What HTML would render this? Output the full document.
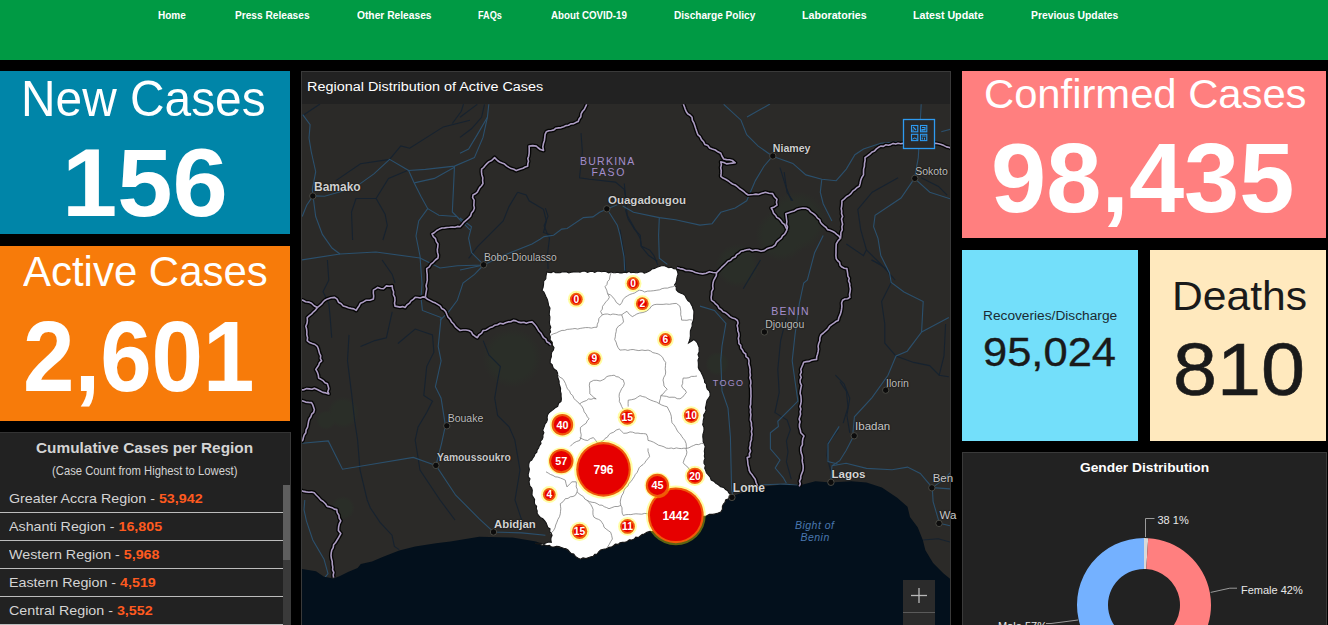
<!DOCTYPE html>
<html><head><meta charset="utf-8"><style>
html,body{margin:0;padding:0;background:#000;width:1328px;height:625px;overflow:hidden;font-family:"Liberation Sans", sans-serif;}
.t{position:absolute;white-space:nowrap;line-height:1;transform-origin:0 0;}
.b{position:absolute;}
</style></head><body>
<div class="b" style="left:0px;top:0px;width:1328px;height:60px;background:#009a44;"></div>
<div class="t" style="left:157.86px;top:9.38px;font-size:11.60px;color:#fff;transform:scaleX(0.8634);font-weight:700;">Home</div>
<div class="t" style="left:234.69px;top:9.38px;font-size:11.60px;color:#fff;transform:scaleX(0.8759);font-weight:700;">Press Releases</div>
<div class="t" style="left:356.59px;top:9.38px;font-size:11.60px;color:#fff;transform:scaleX(0.8831);font-weight:700;">Other Releases</div>
<div class="t" style="left:478.33px;top:9.38px;font-size:11.60px;color:#fff;transform:scaleX(0.7896);font-weight:700;">FAQs</div>
<div class="t" style="left:550.61px;top:9.38px;font-size:11.60px;color:#fff;transform:scaleX(0.8416);font-weight:700;">About COVID-19</div>
<div class="t" style="left:673.70px;top:9.38px;font-size:11.60px;color:#fff;transform:scaleX(0.8695);font-weight:700;">Discharge Policy</div>
<div class="t" style="left:801.96px;top:9.38px;font-size:11.60px;color:#fff;transform:scaleX(0.9205);font-weight:700;">Laboratories</div>
<div class="t" style="left:913.15px;top:9.38px;font-size:11.60px;color:#fff;transform:scaleX(0.9209);font-weight:700;">Latest Update</div>
<div class="t" style="left:1030.98px;top:9.38px;font-size:11.60px;color:#fff;transform:scaleX(0.8921);font-weight:700;">Previous Updates</div>
<div class="b" style="left:0px;top:71px;width:290px;height:163px;background:#0085a8;"></div>
<div class="b" style="left:0px;top:246px;width:290px;height:175px;background:#f77b0a;"></div>
<div class="b" style="left:0px;top:432px;width:291px;height:193px;background:#222222;box-shadow:inset -1px 0 0 #3a3a3a, inset 0 1px 0 #333;"></div>
<div class="b" style="left:301px;top:71px;width:650px;height:554px;background:#222222;box-shadow:inset 0 1px 0 #3a3a3a, inset 1px 0 0 #3a3a3a, inset -1px 0 0 #3a3a3a;"></div>
<div class="b" style="left:962px;top:71px;width:364px;height:167px;background:#ff7f7f;"></div>
<div class="b" style="left:962px;top:250px;width:176px;height:191px;background:#73dffa;"></div>
<div class="b" style="left:1150px;top:250px;width:176px;height:191px;background:#ffe9be;"></div>
<div class="b" style="left:962px;top:452px;width:365px;height:173px;background:#222222;box-shadow:inset 0 1px 0 #3a3a3a, inset 1px 0 0 #3a3a3a, inset -1px 0 0 #3a3a3a;"></div>
<div class="t" style="left:20.97px;top:74.07px;font-size:49.52px;color:#fff;transform:scaleX(0.9661);">New Cases</div>
<div class="t" style="left:61.63px;top:134.96px;font-size:95.59px;color:#fff;transform:scaleX(1.0401);font-weight:700;">156</div>
<div class="t" style="left:22.70px;top:250.60px;font-size:41.70px;color:#fff;transform:scaleX(1.0061);">Active Cases</div>
<div class="t" style="left:22.52px;top:306.43px;font-size:100.47px;color:#fff;transform:scaleX(0.9209);font-weight:700;">2,601</div>
<div class="t" style="left:984.21px;top:74.28px;font-size:41.01px;color:#fff;transform:scaleX(1.0182);">Confirmed Cases</div>
<div class="t" style="left:991.03px;top:128.44px;font-size:99.04px;color:#fff;transform:scaleX(1.0016);font-weight:700;">98,435</div>
<div class="t" style="left:983.30px;top:308.58px;font-size:13.49px;color:#1b2b33;transform:scaleX(1.0171);">Recoveries/Discharge</div>
<div class="t" style="left:982.93px;top:332.00px;font-size:41.34px;color:#1a1a1a;transform:scaleX(1.0521);-webkit-text-stroke:0.35px #1a1a1a;">95,024</div>
<div class="t" style="left:1171.99px;top:275.65px;font-size:40.46px;color:#1a1a1a;transform:scaleX(1.0535);">Deaths</div>
<div class="t" style="left:1172.74px;top:332.00px;font-size:74.64px;color:#1a1a1a;transform:scaleX(1.0592);-webkit-text-stroke:0.6px #1a1a1a;">810</div>
<div class="t" style="left:306.65px;top:80.08px;font-size:13.49px;color:#fff;transform:scaleX(1.0686);">Regional Distribution of Active Cases</div>
<div class="t" style="left:36.08px;top:440.20px;font-size:15.00px;color:#d4d4d4;transform:scaleX(1.0255);font-weight:700;">Cumulative Cases per Region</div>
<div class="t" style="left:51.72px;top:464.55px;font-size:12.11px;color:#d4d4d4;transform:scaleX(0.9310);">(Case Count from Highest to Lowest)</div>
<div class="t" style="left:9.20px;top:491.61px;font-size:13.10px;color:#d4d4d4;transform:scaleX(1.0900);">Greater Accra Region - <b style="color:#ff5a1f">53,942</b></div>
<div class="b" style="left:0px;top:512px;width:283px;height:1px;background:#bdbdbd;"></div>
<div class="t" style="left:9.20px;top:519.61px;font-size:13.10px;color:#d4d4d4;transform:scaleX(1.0900);">Ashanti Region - <b style="color:#ff5a1f">16,805</b></div>
<div class="b" style="left:0px;top:540px;width:283px;height:1px;background:#bdbdbd;"></div>
<div class="t" style="left:9.20px;top:547.61px;font-size:13.10px;color:#d4d4d4;transform:scaleX(1.0900);">Western Region - <b style="color:#ff5a1f">5,968</b></div>
<div class="b" style="left:0px;top:568px;width:283px;height:1px;background:#bdbdbd;"></div>
<div class="t" style="left:9.20px;top:575.61px;font-size:13.10px;color:#d4d4d4;transform:scaleX(1.0900);">Eastern Region - <b style="color:#ff5a1f">4,519</b></div>
<div class="b" style="left:0px;top:596px;width:283px;height:1px;background:#bdbdbd;"></div>
<div class="t" style="left:9.20px;top:603.61px;font-size:13.10px;color:#d4d4d4;transform:scaleX(1.0900);">Central Region - <b style="color:#ff5a1f">3,552</b></div>
<div class="b" style="left:0px;top:624px;width:283px;height:1px;background:#bdbdbd;"></div>
<div class="b" style="left:283px;top:485px;width:7px;height:140px;background:#3a3a3a;"></div>
<div class="b" style="left:283px;top:485px;width:7px;height:75px;background:#5e5e5e;"></div>
<div class="t" style="left:1079.85px;top:461.28px;font-size:13.49px;color:#fff;transform:scaleX(1.0201);font-weight:700;">Gender Distribution</div>

<svg class="b" style="left:0;top:0" width="1328" height="625" viewBox="0 0 1328 625"><clipPath id="mc"><rect x="302" y="104" width="648" height="521"/></clipPath><g clip-path="url(#mc)"><rect x="302" y="104" width="648" height="521" fill="#2b2a28"/>
<defs><radialGradient id="gr"><stop offset="0" stop-color="#2a2e28"/><stop offset="0.7" stop-color="#2a2e28"/><stop offset="1" stop-color="#2a2e28" stop-opacity="0"/></radialGradient></defs>
<circle cx="512" cy="357.8" r="30" fill="url(#gr)"/>
<circle cx="343.2" cy="412.6" r="16" fill="url(#gr)"/>
<circle cx="781.3" cy="235.4" r="26" fill="url(#gr)"/>
<circle cx="797" cy="221" r="30" fill="url(#gr)"/>
<circle cx="737.4" cy="265.8" r="22" fill="url(#gr)"/>
<circle cx="717.3" cy="363.7" r="12" fill="url(#gr)"/>
<circle cx="343" cy="508" r="12" fill="url(#gr)"/>
<circle cx="326" cy="420" r="10" fill="url(#gr)"/>
<polyline points="335.8,180.6 360.5,163.8 389.6,159.4 400.8,145.9 409.7,148.2 443.3,126.9 470.0,120.2" fill="none" stroke="#16222f" stroke-width="1.1"/>
<polyline points="452.3,123.5 461.3,111.2 463.5,104.0" fill="none" stroke="#16222f" stroke-width="1.1"/>
<polyline points="376.1,198.5 388.5,178.4 407.5,170.5" fill="none" stroke="#16222f" stroke-width="1.1"/>
<polyline points="376.1,198.5 356.0,198.5 351.5,212.0 352.6,240.0" fill="none" stroke="#16222f" stroke-width="1.1"/>
<polyline points="376.1,198.5 385.1,214.2 387.3,225.4 382.9,240.0" fill="none" stroke="#16222f" stroke-width="1.1"/>
<polyline points="460.0,117.3 471.5,108.6 477.3,104.3" fill="none" stroke="#16222f" stroke-width="1.1"/>
<polyline points="460.0,137.4 471.5,128.8 481.6,117.3 484.5,104.3" fill="none" stroke="#16222f" stroke-width="1.1"/>
<polyline points="581.0,133.1 582.4,151.8 579.5,177.8 589.6,179.2 615.5,182.1 624.2,189.3 627.0,203.7" fill="none" stroke="#16222f" stroke-width="1.1"/>
<polyline points="517.6,192.2 526.2,195.0 529.1,200.8 543.5,209.4 546.4,221.0 543.5,232.5 552.2,235.4" fill="none" stroke="#16222f" stroke-width="1.1"/>
<polyline points="517.6,192.2 509.0,206.6 503.2,221.0 488.8,235.4 477.3,246.9 468.6,258.4" fill="none" stroke="#16222f" stroke-width="1.1"/>
<polyline points="625.4,209.5 628.1,219.0 634.9,229.8 640.3,235.2 641.0,246.1 649.8,250.1 653.9,255.6 657.9,265.1" fill="none" stroke="#16222f" stroke-width="1.1"/>
<polyline points="545.4,208.1 548.1,216.3 544.1,225.8 546.8,232.5 549.5,238.0 547.5,254.2 548.1,269.1" fill="none" stroke="#16222f" stroke-width="1.1"/>
<polyline points="624.3,183.5 627.2,215.2 640.2,238.2 641.6,246.9 648.8,255.5 657.4,261.3" fill="none" stroke="#16222f" stroke-width="1.1"/>
<polyline points="620.0,229.6 624.3,255.5 625.8,272.8" fill="none" stroke="#16222f" stroke-width="1.1"/>
<polyline points="784.2,172.0 787.0,192.2 792.8,200.8" fill="none" stroke="#16222f" stroke-width="1.1"/>
<polyline points="780.0,167.7 785.8,186.4 791.5,200.8" fill="none" stroke="#16222f" stroke-width="1.1"/>
<polyline points="898.1,177.8 872.2,192.2 857.8,209.5 860.7,229.6 866.4,249.8 863.5,255.6 846.3,244.0" fill="none" stroke="#16222f" stroke-width="1.1"/>
<polyline points="866.4,249.8 880.8,264.2 895.2,280.0" fill="none" stroke="#16222f" stroke-width="1.1"/>
<polyline points="921.2,177.8 938.5,186.4 947.1,195.1" fill="none" stroke="#16222f" stroke-width="1.1"/>
<polyline points="327.4,260.0 328.8,280.2 323.0,291.7 328.8,303.2 330.2,317.6 331.7,337.8" fill="none" stroke="#16222f" stroke-width="1.1"/>
<polyline points="349.0,334.9 347.5,360.8 351.8,395.4 354.7,421.3 357.6,440.0 360.0,470.0 367.2,500.0 370.4,508.0 380.0,522.4 392.0,535.2 394.4,546.4 399.2,549.6" fill="none" stroke="#16222f" stroke-width="1.1"/>
<polyline points="392.2,311.8 386.4,337.8 374.9,340.6 360.5,346.4" fill="none" stroke="#16222f" stroke-width="1.1"/>
<polyline points="397.9,343.5 415.2,329.1 432.5,334.9 433.9,352.2 426.7,366.6 423.8,395.4 432.5,401.1 426.7,412.6 418.1,427.0 415.2,440.0 420.0,470.0 440.0,500.0 455.0,520.0" fill="none" stroke="#16222f" stroke-width="1.1"/>
<polyline points="382.1,260.0 392.2,274.4 395.0,283.0" fill="none" stroke="#16222f" stroke-width="1.1"/>
<polyline points="483.2,340.6 488.9,355.0 500.4,366.5 497.6,380.9 494.7,398.1 497.6,415.4 509.1,426.9 514.8,439.9 520.0,470.0 515.0,500.0 525.0,530.0" fill="none" stroke="#16222f" stroke-width="1.1"/>
<polyline points="760.5,260.0 751.8,274.4 743.2,288.8" fill="none" stroke="#16222f" stroke-width="1.1"/>
<polyline points="786.4,317.6 780.6,340.6 777.8,369.4 779.2,392.5 774.9,412.6 787.2,420.0 790.4,429.6 786.4,440.8 788.0,452.0 786.4,461.6 791.2,479.2" fill="none" stroke="#16222f" stroke-width="1.1"/>
<polyline points="835.4,375.2 844.0,383.8 849.8,398.2 846.9,415.5 849.8,432.8" fill="none" stroke="#16222f" stroke-width="1.1"/>
<polyline points="871.4,260.0 880.0,264.3" fill="none" stroke="#16222f" stroke-width="1.1"/>
<polyline points="872.0,260.0 888.0,269.6 891.2,282.4 881.6,301.6 884.8,324.0 884.8,343.2 896.0,356.0 913.6,362.4 929.6,365.6 939.2,375.2 948.8,376.8" fill="none" stroke="#16222f" stroke-width="1.1"/>
<polyline points="939.2,375.2 944.0,356.0 945.6,324.0" fill="none" stroke="#16222f" stroke-width="1.1"/>
<polyline points="840.0,381.6 846.4,391.2 848.0,407.2 843.2,423.2" fill="none" stroke="#16222f" stroke-width="1.1"/>
<polyline points="838.4,430.0 828.1,442.8 826.9,455.6 830.7,471.0" fill="none" stroke="#16222f" stroke-width="1.1"/>
<polyline points="922.8,540.0 938.2,538.8 952.0,542.6" fill="none" stroke="#16222f" stroke-width="1.1"/>
<polyline points="320.0,104.0 302.0,116.0" fill="none" stroke="#16222f" stroke-width="1.1"/>
<polyline points="302.7,114.6 310.1,124.6 309.0,138.1 311.2,151.5 315.7,171.7 312.3,189.6 313.0,195.9" fill="none" stroke="#2b506d" stroke-width="1.1"/>
<polyline points="313.0,195.9 324.6,196.3 340.3,191.8 358.2,185.1 373.9,173.9 389.6,159.4 408.6,170.5 414.2,182.9 420.9,196.3 427.7,208.6 418.7,220.9 416.0,236.0 420.0,256.0 422.0,284.0 421.0,297.4 422.4,310.4 441.1,317.6 438.2,346.4 441.1,360.8 435.4,386.7 441.1,398.2 445.4,425.6 441.6,443.3 435.9,465.4 455.7,495.2 479.3,518.8 493.5,532.0 521.8,532.9 545.4,535.3" fill="none" stroke="#2b506d" stroke-width="1.1"/>
<polyline points="408.6,170.5 425.4,169.4 454.5,166.1 470.0,159.4 474.4,157.6 483.0,137.4 487.4,117.3 488.8,104.3" fill="none" stroke="#2b506d" stroke-width="1.1"/>
<polyline points="414.2,182.9 434.4,178.4 454.5,167.2" fill="none" stroke="#2b506d" stroke-width="1.1"/>
<polyline points="454.5,166.1 453.4,189.6 452.3,212.0 456.8,216.5 470.0,229.9" fill="none" stroke="#2b506d" stroke-width="1.1"/>
<polyline points="427.7,208.6 438.9,215.3 456.8,216.5" fill="none" stroke="#2b506d" stroke-width="1.1"/>
<polyline points="313.0,195.9 306.7,205.3 302.2,216.5" fill="none" stroke="#2b506d" stroke-width="1.1"/>
<polyline points="313.0,195.9 315.7,216.5 322.4,234.4 332.0,248.0 340.0,254.0" fill="none" stroke="#2b506d" stroke-width="1.1"/>
<polyline points="301.0,260.0 340.0,254.0 376.0,252.0 420.0,258.0 440.0,268.0 457.3,265.8 483.6,265.0 503.2,255.5 532.0,244.0 540.0,239.3 544.1,236.6 553.6,235.2 561.7,229.1 567.1,228.5 583.4,217.6 592.9,216.9 599.6,212.2 606.9,208.9 617.3,204.7" fill="none" stroke="#2b506d" stroke-width="1.1"/>
<polyline points="483.6,265.0 474.5,274.4 463.0,283.0 457.3,300.3 448.6,311.8 440.0,320.4" fill="none" stroke="#2b506d" stroke-width="1.1"/>
<polyline points="483.6,265.0 460.0,270.0" fill="none" stroke="#2b506d" stroke-width="1.1"/>
<polyline points="460.0,218.0 471.5,226.7 468.6,238.2 471.5,252.6 483.0,264.2" fill="none" stroke="#2b506d" stroke-width="1.1"/>
<polyline points="460.0,153.3 468.6,149.0 477.3,134.6 487.4,117.3" fill="none" stroke="#2b506d" stroke-width="1.1"/>
<polyline points="609.1,212.2 617.3,225.1 620.0,235.2 624.0,256.9 624.7,270.5" fill="none" stroke="#2b506d" stroke-width="1.1"/>
<polyline points="622.7,206.1 633.5,212.2 659.3,217.6 675.5,219.7 699.9,225.1 712.1,223.7 720.8,212.3 735.2,208.0 746.7,200.8 755.4,180.6 764.0,166.2 772.6,156.2" fill="none" stroke="#2b506d" stroke-width="1.1"/>
<polyline points="659.3,217.6 658.6,235.2 659.3,258.3 667.4,264.4" fill="none" stroke="#2b506d" stroke-width="1.1"/>
<polyline points="772.6,156.2 758.2,146.1 746.7,134.6 741.0,120.2 723.7,104.3" fill="none" stroke="#2b506d" stroke-width="1.1"/>
<polyline points="772.6,156.2 792.8,163.4 805.9,174.9 821.8,179.2 836.2,180.7 846.3,169.1 854.9,154.7 863.5,149.0 880.8,143.2 898.1,141.8" fill="none" stroke="#2b506d" stroke-width="1.1"/>
<polyline points="821.8,179.2 820.3,192.2 823.2,203.7 831.9,221.0" fill="none" stroke="#2b506d" stroke-width="1.1"/>
<polyline points="914.5,178.4 901.0,198.0 875.1,215.2 873.6,226.8 878.0,238.3 880.8,255.6 889.5,272.9 891.2,282.4 904.0,292.0 923.2,301.6 921.6,332.0 907.2,351.2 896.0,356.0 888.0,375.2 872.0,397.6 854.4,416.8 852.8,434.4" fill="none" stroke="#2b506d" stroke-width="1.1"/>
<polyline points="921.6,332.0 948.8,317.6" fill="none" stroke="#2b506d" stroke-width="1.1"/>
<polyline points="914.5,178.4 929.8,192.2 952.0,199.4" fill="none" stroke="#2b506d" stroke-width="1.1"/>
<polyline points="914.5,178.4 918.3,157.6 921.2,104.3" fill="none" stroke="#2b506d" stroke-width="1.1"/>
<polyline points="941.3,131.7 952.0,128.8" fill="none" stroke="#2b506d" stroke-width="1.1"/>
<polyline points="823.2,235.4 814.6,252.7 807.4,280.0 803.7,283.0 799.4,303.2 795.0,334.9 792.2,360.8 795.0,381.0 797.9,401.1 792.2,406.9 777.8,421.3 778.4,426.4 770.4,432.8 770.4,448.8 780.0,460.0 775.2,468.0 783.2,477.6 786.4,483.2" fill="none" stroke="#2b506d" stroke-width="1.1"/>
<polyline points="700.0,306.1 714.4,310.4 725.9,323.4 722.0,346.0 720.8,360.0 722.0,391.0 728.0,408.0 730.4,436.8 731.6,489.6 732.8,495.2" fill="none" stroke="#2b506d" stroke-width="1.1"/>
<polyline points="854.2,435.1 846.1,450.5 839.7,460.7 832.0,465.8 830.7,482.5" fill="none" stroke="#2b506d" stroke-width="1.1"/>
<polyline points="832.0,465.8 846.1,463.3 866.5,468.4 892.1,469.7 907.5,467.1 920.3,473.5 932.3,487.6 951.0,488.9" fill="none" stroke="#2b506d" stroke-width="1.1"/>
<polyline points="932.3,487.6 933.1,501.6 939.5,523.4 951.0,526.0" fill="none" stroke="#2b506d" stroke-width="1.1"/>
<polyline points="932.3,487.6 943.3,479.9 952.0,470.9" fill="none" stroke="#2b506d" stroke-width="1.1"/>
<polyline points="760.8,484.8 784.8,484.0 799.2,485.6" fill="none" stroke="#2b506d" stroke-width="1.1"/>
<polyline points="839.2,426.4 828.0,444.0 828.0,461.6 837.6,464.0" fill="none" stroke="#2b506d" stroke-width="1.1"/>
<polyline points="301.0,443.3 328.3,440.9 342.5,469.2 370.8,464.5 413.3,457.4 435.9,465.4" fill="none" stroke="#2b506d" stroke-width="1.1"/>
<polyline points="304.8,500.0 304.0,509.6 306.4,520.8 312.8,540.0 324.0,559.2 328.0,573.6 324.8,577.6" fill="none" stroke="#2b506d" stroke-width="1.1"/>
<polyline points="747.0,117.0 770.0,104.0" fill="none" stroke="#2b506d" stroke-width="1.1"/>
<polygon points="301.0,568.8 316.0,571.2 324.0,576.8 333.6,578.4 340.0,576.0 348.0,572.0 357.6,568.0 360.8,564.0 372.0,561.6 383.2,556.8 399.2,550.4 415.2,546.4 436.0,543.2 450.4,541.6 479.3,536.7 512.4,537.6 536.0,541.4 546.8,545.7 563.6,548.2 573.7,554.1 580.4,559.2 588.8,557.5 597.2,554.1 600.6,549.9 609.0,547.4 622.4,542.4 634.2,539.0 644.3,534.0 650.0,531.4 670.0,528.0 690.0,521.0 701.9,517.0 712.8,514.4 720.8,512.0 722.4,506.4 725.6,500.0 732.8,496.0 748.0,490.4 764.0,486.4 780.0,484.8 799.2,485.6 815.4,481.2 830.7,482.5 851.2,481.2 866.5,482.5 881.9,487.6 897.2,497.8 907.5,506.8 910.0,517.0 917.7,527.2 922.8,540.0 925.4,550.3 933.1,563.1 943.3,573.3 951.0,579.7 951.0,626.0 301.0,626.0" fill="#03101c"/>
<polyline points="586.7,104.3 585.5,106.8 584.3,109.4 582.4,111.5 581.1,113.9 580.8,116.8 579.1,119.1 578.1,121.6 575.7,122.6 573.4,123.7 570.8,123.9 568.5,125.3 565.9,125.6 563.7,126.8 561.2,127.6 558.6,127.9 556.0,128.2 553.9,129.9 551.4,130.5 548.8,130.8 546.4,131.7 545.1,134.4 544.8,137.4 544.4,140.4 543.5,143.2 542.8,146.8 543.5,150.4 540.4,149.5 537.8,147.5 536.3,146.1 532.7,145.6 529.1,146.1 529.2,148.6 529.2,151.2 529.1,153.7 528.7,156.2 527.8,158.6 528.5,161.2 527.8,163.7 527.7,166.2 525.2,167.0 523.0,168.3 520.5,169.1 516.2,170.6 513.9,169.3 511.2,168.6 508.9,167.4 506.6,165.9 504.6,164.1 502.1,163.1 499.6,162.0 497.4,160.5 494.6,157.6 491.7,160.5 488.8,161.9 486.9,163.6 485.2,165.5 483.6,167.5 481.6,169.1 481.5,172.0 481.9,174.9 482.8,177.7 482.6,180.6 483.0,183.5 481.5,185.7 479.7,187.6 478.5,189.8 477.3,192.2 475.3,193.8 473.0,195.0 472.6,197.7 474.1,200.1 474.0,202.8 473.8,205.4 474.4,208.0 473.4,210.8 471.5,213.1 470.6,215.9 468.6,218.1 466.3,220.1 464.0,222.1 462.1,224.5 460.0,226.7 457.4,226.4 454.9,227.3 452.3,227.0 449.7,227.3 447.1,227.5 444.6,227.9 442.0,228.0 439.3,229.1 436.7,230.5 434.5,232.5 432.0,234.0 433.3,236.6 435.5,238.7 436.3,241.6 438.0,244.0 437.8,246.8 437.3,249.6 437.5,252.4 438.3,255.2 438.0,258.0 435.4,260.0 433.3,262.3 430.9,264.1 429.3,266.9 426.7,268.6 426.8,271.5 427.2,274.4 427.2,277.2 427.3,280.1 426.7,283.0 426.0,285.8 426.7,288.8 426.2,291.7 425.7,294.5 425.3,297.4" fill="none" stroke="#050505" stroke-width="4.2" stroke-linejoin="round"/>
<polyline points="425.3,297.4 422.8,296.9 420.2,298.0 417.7,297.5 415.2,297.4 413.2,299.3 411.0,300.9 409.4,303.2 406.9,305.0 405.1,307.5 402.6,306.6 400.0,307.1 397.5,306.6 395.0,306.1 394.5,303.2 395.0,300.3 394.8,297.4 393.4,294.6 393.6,291.7 392.5,288.9 392.2,285.9 389.3,286.3 386.4,285.9 383.5,288.8 380.6,288.5 377.8,287.4 375.6,288.8 373.4,290.2 373.3,293.1 373.7,296.0 373.4,298.9 369.9,300.3 366.2,300.3 363.4,301.9 360.5,303.2 359.2,305.7 357.6,308.0 356.2,310.4 353.8,308.9 351.1,308.4 348.4,307.8 345.9,306.8 343.2,306.1 341.2,303.8 338.5,302.2 337.1,299.2 334.6,297.4 330.9,297.8 327.4,298.9 325.0,300.2 323.1,302.0 321.4,304.2 319.4,305.9 317.3,307.5 314.1,305.8 311.5,303.2 308.7,302.1 305.6,301.8 302.9,300.3 301.0,300.0" fill="none" stroke="#050505" stroke-width="4.2" stroke-linejoin="round"/>
<polyline points="317.3,307.5 315.7,309.9 313.5,311.8 311.6,313.9 309.4,315.7 307.2,317.6 307.4,320.6 307.0,323.4 305.8,326.2 306.6,329.0 306.9,331.9 306.8,334.8 307.6,337.7 307.2,340.6 309.5,342.5 312.2,343.6 315.0,344.5 317.3,346.4 318.3,348.7 318.9,351.1 319.6,353.5 320.7,355.8 320.4,358.5 321.6,360.8 319.6,362.6 318.7,365.1 317.3,367.3 315.8,369.4 317.3,372.1 318.3,375.0 318.7,378.1 321.0,379.3 323.2,380.7 325.0,382.8 327.4,383.8 328.2,386.3 328.8,388.8 327.8,391.5 328.8,393.9 325.9,392.9 322.9,392.4 320.2,391.0 317.3,389.5 314.4,388.2 312.0,389.2 309.3,388.9 306.7,388.6 304.3,389.6 301.0,390.0" fill="none" stroke="#050505" stroke-width="4.2" stroke-linejoin="round"/>
<polyline points="301.0,400.5 302.9,401.1 305.7,402.1 308.6,402.4 311.5,402.6 312.8,404.9 313.6,407.3 314.4,409.8 313.7,412.3 311.7,414.2 310.9,416.7 309.4,418.8 308.6,421.3 308.1,424.2 307.6,427.1 306.1,429.8 305.8,432.8 304.2,434.9 303.4,437.4 302.9,440.0 301.0,442.0" fill="none" stroke="#050505" stroke-width="4.2" stroke-linejoin="round"/>
<polyline points="301.0,490.5 303.6,491.4 306.2,491.9 308.9,492.2 311.6,492.0 314.2,492.8 316.4,495.2 318.7,497.5 320.8,500.0 323.4,501.7 325.5,503.8 327.2,506.4 329.7,506.9 332.1,507.7 334.3,509.1 336.8,509.6 337.2,512.6 338.9,515.2 339.2,518.2 340.8,520.8 339.3,523.8 338.6,527.0 338.4,530.4 340.8,533.6 339.5,535.9 338.2,538.3 336.8,540.5 335.4,542.8 333.6,544.8 333.2,547.6 331.8,550.1 331.2,552.8 331.0,555.7 331.4,558.6 332.2,561.4 332.3,564.3 332.8,567.2 332.6,569.8 333.8,572.4 333.2,575.0 333.6,577.6" fill="none" stroke="#050505" stroke-width="4.2" stroke-linejoin="round"/>
<polyline points="425.3,297.4 427.6,299.3 430.3,300.6 432.9,302.0 435.6,303.1 438.2,304.6 440.4,306.1 441.7,308.5 444.1,309.8 445.8,311.8 446.9,314.5 448.1,317.2 450.2,319.3 451.5,321.9 453.7,324.0 455.4,326.6 457.7,328.6 460.1,330.5 463.0,330.0 465.9,330.0 468.8,330.5 471.3,331.9 472.7,334.5 475.0,336.2 477.4,337.7 478.9,335.0 481.6,333.2 483.2,330.5 485.9,330.2 488.1,328.8 490.3,327.4 492.8,326.7 495.0,325.2 497.6,324.7 500.1,323.3 503.0,323.9 505.6,322.8 508.1,321.9 510.9,321.7 513.4,320.4 516.0,320.9 518.4,322.1 521.0,322.6 523.8,322.3 526.3,323.3 529.1,322.3 532.1,321.9 534.2,324.1 536.2,326.5 537.8,329.1 539.1,331.3 541.0,333.2 542.2,335.5 543.6,337.7 545.8,339.1 546.8,341.7 549.1,343.0 550.8,344.9" fill="none" stroke="#050505" stroke-width="4.2" stroke-linejoin="round"/>
<polyline points="683.4,104.3 684.4,106.7 685.2,109.1 686.2,111.5 687.7,113.8 690.1,115.3 692.0,117.3 692.4,120.4 693.9,123.0 694.9,125.9 695.8,128.8 696.8,131.7 697.8,134.6 700.1,136.7 701.5,139.6 703.6,141.8 705.0,144.6 707.8,145.5 709.6,147.9 712.2,149.0 715.3,150.0 717.9,151.8 720.8,153.3 722.0,156.3 723.7,159.0 726.6,159.6 729.5,159.8 732.3,160.5 735.2,162.8 732.3,163.1 729.5,163.5 726.6,163.9 723.8,162.5 720.8,161.9 721.4,164.8 720.7,167.7 721.2,170.5 721.1,173.4 720.8,176.3 723.0,178.1 725.6,179.2 728.0,180.7 730.2,182.4 732.5,184.0 735.2,185.0 737.4,186.6 739.4,188.5 741.7,190.0 743.9,191.7 745.9,193.5 748.2,195.0 750.8,194.7 753.4,194.5 755.9,194.1 758.6,194.5 761.1,193.6 765.4,192.2 768.9,193.2 772.6,193.6 774.4,196.8 777.0,199.4 776.4,202.2 777.0,205.1 774.3,206.9 771.2,208.0 772.6,210.4 773.5,213.1 775.5,215.2 776.8,217.4 779.2,218.7 780.9,220.6 782.3,222.8 784.4,224.4 785.6,226.7 787.0,229.6" fill="none" stroke="#050505" stroke-width="4.2" stroke-linejoin="round"/>
<polyline points="787.0,229.6 785.9,232.0 784.6,234.2 782.5,235.9 781.3,238.2 778.8,240.1 776.6,242.2 775.1,245.1 772.6,246.9 769.6,247.7 766.8,248.8 764.2,250.6 761.1,251.2 758.3,250.4 755.4,250.0 752.4,250.8 749.6,249.4 746.7,249.8 743.9,250.6 741.0,251.2 739.1,253.1 736.6,254.6 735.2,257.0 732.6,258.0 730.6,260.3 728.0,261.3 725.9,263.5 723.7,265.6 721.5,267.7 719.4,269.9 716.5,272.8 712.9,272.5 709.4,271.8 706.1,273.3 702.6,273.9 698.6,273.2 695.4,272.5 692.4,271.1 689.1,270.5 685.9,270.5 683.0,269.1 679.9,268.6 676.9,267.8" fill="none" stroke="#050505" stroke-width="4.2" stroke-linejoin="round"/>
<polyline points="716.5,272.8 716.3,275.6 715.0,278.0 713.7,280.4 713.0,283.0 712.7,285.9 713.1,288.8 711.6,291.6 711.6,294.5 711.1,297.4 711.5,300.3 713.8,301.8 715.6,303.9 717.7,305.6 718.9,308.2 721.3,309.7 723.0,311.8 725.7,312.8 727.9,314.6 729.9,316.6 732.4,318.0 735.2,318.8 737.4,320.5 738.1,323.0 737.1,325.6 737.8,328.2 737.8,330.7 738.8,333.2 739.0,335.8 738.3,338.4 738.8,340.9 738.9,343.5 740.7,345.4 740.9,348.1 742.5,350.1 743.6,352.4 745.7,354.0 746.0,356.7 748.3,358.3 749.0,360.8 748.8,363.7 749.6,366.6 750.1,369.4 750.0,372.3 750.4,375.2 749.8,377.8 750.7,380.5 750.9,383.1 750.4,385.7 750.8,388.4 750.9,391.0 750.9,393.6 751.0,396.3 750.8,398.9 750.7,401.6 750.7,404.2 750.0,406.8 750.7,409.5 750.4,412.1 750.9,414.7 750.6,417.4 750.4,420.0 751.4,422.8 751.4,425.7 752.0,428.6 751.4,431.6 752.0,434.4 751.4,437.1 751.4,439.8 750.4,442.4 750.3,445.3 749.5,448.1 750.5,451.1 749.3,453.9 749.6,456.8 747.2,457.6 747.7,461.2 748.0,464.8 748.8,467.5 749.2,470.3 750.4,472.8 752.1,474.8 753.6,477.1 755.2,479.2 756.2,482.7 757.6,486.0" fill="none" stroke="#050505" stroke-width="4.2" stroke-linejoin="round"/>
<polyline points="787.0,229.6 787.5,226.9 786.4,224.4 786.9,221.7 786.5,219.0 786.2,216.4 785.8,213.8 788.6,212.7 791.5,211.7 794.4,210.9 797.1,209.3 800.0,208.5 803.0,208.0 806.1,208.2 808.8,209.5 810.7,211.9 813.4,213.6 815.7,215.6 817.5,218.1 819.6,219.6 820.5,222.2 822.1,224.2 824.0,225.9 826.1,227.5 827.5,229.6 830.0,230.2 832.4,231.3 834.7,232.5 836.7,234.4 838.9,236.0 840.5,238.3" fill="none" stroke="#050505" stroke-width="4.2" stroke-linejoin="round"/>
<polyline points="840.5,238.3 840.8,235.4 840.9,232.5 842.2,229.8 841.9,226.8 842.6,224.2 842.0,221.6 841.5,219.0 842.6,216.4 841.6,213.8 841.7,211.2 841.2,208.6 841.7,206.0 841.9,203.4 841.9,200.8 844.3,198.9 846.4,196.7 849.1,195.1 851.1,193.4 852.7,191.1 854.9,189.6 856.8,187.7 859.2,186.4 860.1,183.5 860.7,180.4 861.8,177.5 863.5,174.9 863.5,172.0 863.6,169.1 864.4,166.3 864.5,163.4 865.1,160.5 865.0,157.6 867.5,155.9 870.0,154.0 872.2,151.9 874.6,150.9 876.4,148.9 878.5,147.3 880.8,146.1 883.4,146.4 885.7,144.8 888.3,145.2 890.7,144.6 893.1,143.4 895.7,144.1 898.1,143.2 900.6,143.7 903.1,143.4 905.6,143.5 908.1,143.6 910.6,142.7 913.1,143.2 915.6,143.2 918.1,143.7 920.6,143.6 923.1,143.7 925.6,143.3 928.1,143.7 930.6,143.5 933.1,143.5 935.6,143.2 938.5,143.8 941.3,144.5 944.0,145.6 946.6,146.9 949.5,147.5 952.0,149.0" fill="none" stroke="#050505" stroke-width="4.2" stroke-linejoin="round"/>
<polyline points="840.5,238.3 838.0,240.9 836.2,244.0 836.1,246.9 836.0,249.8 836.0,252.7 835.9,255.6 836.2,258.5 837.6,260.6 839.6,262.4 840.1,265.2 841.9,267.1 844.3,268.2 846.9,268.6 847.3,271.1 847.7,273.6 847.9,276.1 849.2,278.4 848.6,281.0 849.7,283.4 849.8,285.9 850.4,288.8 850.1,291.6 849.5,294.5 849.8,297.4 847.6,298.7 844.9,299.0 842.6,300.3 841.6,303.1 841.9,306.1 841.6,308.9 841.1,311.8 840.2,314.7 838.9,317.5 838.2,320.5 835.8,321.6 833.8,323.2 831.6,324.6 829.6,326.2 827.9,328.8 825.7,330.9 823.4,333.0 821.0,334.9 819.9,337.7 819.8,340.7 818.7,343.5 818.1,346.4 818.5,349.1 818.1,351.7 817.5,354.2 816.7,356.8 816.6,359.4 814.0,359.7 811.4,360.3 808.9,361.4 806.3,361.6 803.7,362.2 802.8,364.6 801.8,367.0 800.8,369.4 801.3,372.1 800.2,374.7 801.2,377.4 800.1,380.0 800.2,382.7 801.5,385.4 800.9,388.0 800.4,390.7 800.1,393.4 800.9,396.0 801.1,398.7 801.2,401.3 800.8,404.0 800.0,406.5 800.9,409.1 800.2,411.6 800.6,414.1 799.9,416.6 799.1,419.1 800.1,421.7 799.4,424.2 799.4,427.1 800.3,429.9 800.8,432.8 804.0,436.0 802.8,438.8 802.4,441.7 802.4,444.7 800.9,447.4 800.8,450.4 801.2,452.9 802.1,455.3 802.5,457.8 802.2,460.5 802.6,463.0 803.1,465.4 803.2,468.0 802.9,470.8 801.8,473.4 800.8,476.0 800.7,478.6 799.5,481.1 800.3,483.9 799.2,486.4" fill="none" stroke="#050505" stroke-width="4.2" stroke-linejoin="round"/>
<polyline points="586.7,104.3 585.5,106.8 584.3,109.4 582.4,111.5 581.1,113.9 580.8,116.8 579.1,119.1 578.1,121.6 575.7,122.6 573.4,123.7 570.8,123.9 568.5,125.3 565.9,125.6 563.7,126.8 561.2,127.6 558.6,127.9 556.0,128.2 553.9,129.9 551.4,130.5 548.8,130.8 546.4,131.7 545.1,134.4 544.8,137.4 544.4,140.4 543.5,143.2 542.8,146.8 543.5,150.4 540.4,149.5 537.8,147.5 536.3,146.1 532.7,145.6 529.1,146.1 529.2,148.6 529.2,151.2 529.1,153.7 528.7,156.2 527.8,158.6 528.5,161.2 527.8,163.7 527.7,166.2 525.2,167.0 523.0,168.3 520.5,169.1 516.2,170.6 513.9,169.3 511.2,168.6 508.9,167.4 506.6,165.9 504.6,164.1 502.1,163.1 499.6,162.0 497.4,160.5 494.6,157.6 491.7,160.5 488.8,161.9 486.9,163.6 485.2,165.5 483.6,167.5 481.6,169.1 481.5,172.0 481.9,174.9 482.8,177.7 482.6,180.6 483.0,183.5 481.5,185.7 479.7,187.6 478.5,189.8 477.3,192.2 475.3,193.8 473.0,195.0 472.6,197.7 474.1,200.1 474.0,202.8 473.8,205.4 474.4,208.0 473.4,210.8 471.5,213.1 470.6,215.9 468.6,218.1 466.3,220.1 464.0,222.1 462.1,224.5 460.0,226.7 457.4,226.4 454.9,227.3 452.3,227.0 449.7,227.3 447.1,227.5 444.6,227.9 442.0,228.0 439.3,229.1 436.7,230.5 434.5,232.5 432.0,234.0 433.3,236.6 435.5,238.7 436.3,241.6 438.0,244.0 437.8,246.8 437.3,249.6 437.5,252.4 438.3,255.2 438.0,258.0 435.4,260.0 433.3,262.3 430.9,264.1 429.3,266.9 426.7,268.6 426.8,271.5 427.2,274.4 427.2,277.2 427.3,280.1 426.7,283.0 426.0,285.8 426.7,288.8 426.2,291.7 425.7,294.5 425.3,297.4" fill="none" stroke="#ac9cc2" stroke-width="1.6" stroke-linejoin="round"/>
<polyline points="425.3,297.4 422.8,296.9 420.2,298.0 417.7,297.5 415.2,297.4 413.2,299.3 411.0,300.9 409.4,303.2 406.9,305.0 405.1,307.5 402.6,306.6 400.0,307.1 397.5,306.6 395.0,306.1 394.5,303.2 395.0,300.3 394.8,297.4 393.4,294.6 393.6,291.7 392.5,288.9 392.2,285.9 389.3,286.3 386.4,285.9 383.5,288.8 380.6,288.5 377.8,287.4 375.6,288.8 373.4,290.2 373.3,293.1 373.7,296.0 373.4,298.9 369.9,300.3 366.2,300.3 363.4,301.9 360.5,303.2 359.2,305.7 357.6,308.0 356.2,310.4 353.8,308.9 351.1,308.4 348.4,307.8 345.9,306.8 343.2,306.1 341.2,303.8 338.5,302.2 337.1,299.2 334.6,297.4 330.9,297.8 327.4,298.9 325.0,300.2 323.1,302.0 321.4,304.2 319.4,305.9 317.3,307.5 314.1,305.8 311.5,303.2 308.7,302.1 305.6,301.8 302.9,300.3 301.0,300.0" fill="none" stroke="#ac9cc2" stroke-width="1.6" stroke-linejoin="round"/>
<polyline points="317.3,307.5 315.7,309.9 313.5,311.8 311.6,313.9 309.4,315.7 307.2,317.6 307.4,320.6 307.0,323.4 305.8,326.2 306.6,329.0 306.9,331.9 306.8,334.8 307.6,337.7 307.2,340.6 309.5,342.5 312.2,343.6 315.0,344.5 317.3,346.4 318.3,348.7 318.9,351.1 319.6,353.5 320.7,355.8 320.4,358.5 321.6,360.8 319.6,362.6 318.7,365.1 317.3,367.3 315.8,369.4 317.3,372.1 318.3,375.0 318.7,378.1 321.0,379.3 323.2,380.7 325.0,382.8 327.4,383.8 328.2,386.3 328.8,388.8 327.8,391.5 328.8,393.9 325.9,392.9 322.9,392.4 320.2,391.0 317.3,389.5 314.4,388.2 312.0,389.2 309.3,388.9 306.7,388.6 304.3,389.6 301.0,390.0" fill="none" stroke="#ac9cc2" stroke-width="1.6" stroke-linejoin="round"/>
<polyline points="301.0,400.5 302.9,401.1 305.7,402.1 308.6,402.4 311.5,402.6 312.8,404.9 313.6,407.3 314.4,409.8 313.7,412.3 311.7,414.2 310.9,416.7 309.4,418.8 308.6,421.3 308.1,424.2 307.6,427.1 306.1,429.8 305.8,432.8 304.2,434.9 303.4,437.4 302.9,440.0 301.0,442.0" fill="none" stroke="#ac9cc2" stroke-width="1.6" stroke-linejoin="round"/>
<polyline points="301.0,490.5 303.6,491.4 306.2,491.9 308.9,492.2 311.6,492.0 314.2,492.8 316.4,495.2 318.7,497.5 320.8,500.0 323.4,501.7 325.5,503.8 327.2,506.4 329.7,506.9 332.1,507.7 334.3,509.1 336.8,509.6 337.2,512.6 338.9,515.2 339.2,518.2 340.8,520.8 339.3,523.8 338.6,527.0 338.4,530.4 340.8,533.6 339.5,535.9 338.2,538.3 336.8,540.5 335.4,542.8 333.6,544.8 333.2,547.6 331.8,550.1 331.2,552.8 331.0,555.7 331.4,558.6 332.2,561.4 332.3,564.3 332.8,567.2 332.6,569.8 333.8,572.4 333.2,575.0 333.6,577.6" fill="none" stroke="#ac9cc2" stroke-width="1.6" stroke-linejoin="round"/>
<polyline points="425.3,297.4 427.6,299.3 430.3,300.6 432.9,302.0 435.6,303.1 438.2,304.6 440.4,306.1 441.7,308.5 444.1,309.8 445.8,311.8 446.9,314.5 448.1,317.2 450.2,319.3 451.5,321.9 453.7,324.0 455.4,326.6 457.7,328.6 460.1,330.5 463.0,330.0 465.9,330.0 468.8,330.5 471.3,331.9 472.7,334.5 475.0,336.2 477.4,337.7 478.9,335.0 481.6,333.2 483.2,330.5 485.9,330.2 488.1,328.8 490.3,327.4 492.8,326.7 495.0,325.2 497.6,324.7 500.1,323.3 503.0,323.9 505.6,322.8 508.1,321.9 510.9,321.7 513.4,320.4 516.0,320.9 518.4,322.1 521.0,322.6 523.8,322.3 526.3,323.3 529.1,322.3 532.1,321.9 534.2,324.1 536.2,326.5 537.8,329.1 539.1,331.3 541.0,333.2 542.2,335.5 543.6,337.7 545.8,339.1 546.8,341.7 549.1,343.0 550.8,344.9" fill="none" stroke="#ac9cc2" stroke-width="1.6" stroke-linejoin="round"/>
<polyline points="683.4,104.3 684.4,106.7 685.2,109.1 686.2,111.5 687.7,113.8 690.1,115.3 692.0,117.3 692.4,120.4 693.9,123.0 694.9,125.9 695.8,128.8 696.8,131.7 697.8,134.6 700.1,136.7 701.5,139.6 703.6,141.8 705.0,144.6 707.8,145.5 709.6,147.9 712.2,149.0 715.3,150.0 717.9,151.8 720.8,153.3 722.0,156.3 723.7,159.0 726.6,159.6 729.5,159.8 732.3,160.5 735.2,162.8 732.3,163.1 729.5,163.5 726.6,163.9 723.8,162.5 720.8,161.9 721.4,164.8 720.7,167.7 721.2,170.5 721.1,173.4 720.8,176.3 723.0,178.1 725.6,179.2 728.0,180.7 730.2,182.4 732.5,184.0 735.2,185.0 737.4,186.6 739.4,188.5 741.7,190.0 743.9,191.7 745.9,193.5 748.2,195.0 750.8,194.7 753.4,194.5 755.9,194.1 758.6,194.5 761.1,193.6 765.4,192.2 768.9,193.2 772.6,193.6 774.4,196.8 777.0,199.4 776.4,202.2 777.0,205.1 774.3,206.9 771.2,208.0 772.6,210.4 773.5,213.1 775.5,215.2 776.8,217.4 779.2,218.7 780.9,220.6 782.3,222.8 784.4,224.4 785.6,226.7 787.0,229.6" fill="none" stroke="#ac9cc2" stroke-width="1.6" stroke-linejoin="round"/>
<polyline points="787.0,229.6 785.9,232.0 784.6,234.2 782.5,235.9 781.3,238.2 778.8,240.1 776.6,242.2 775.1,245.1 772.6,246.9 769.6,247.7 766.8,248.8 764.2,250.6 761.1,251.2 758.3,250.4 755.4,250.0 752.4,250.8 749.6,249.4 746.7,249.8 743.9,250.6 741.0,251.2 739.1,253.1 736.6,254.6 735.2,257.0 732.6,258.0 730.6,260.3 728.0,261.3 725.9,263.5 723.7,265.6 721.5,267.7 719.4,269.9 716.5,272.8 712.9,272.5 709.4,271.8 706.1,273.3 702.6,273.9 698.6,273.2 695.4,272.5 692.4,271.1 689.1,270.5 685.9,270.5 683.0,269.1 679.9,268.6 676.9,267.8" fill="none" stroke="#ac9cc2" stroke-width="1.6" stroke-linejoin="round"/>
<polyline points="716.5,272.8 716.3,275.6 715.0,278.0 713.7,280.4 713.0,283.0 712.7,285.9 713.1,288.8 711.6,291.6 711.6,294.5 711.1,297.4 711.5,300.3 713.8,301.8 715.6,303.9 717.7,305.6 718.9,308.2 721.3,309.7 723.0,311.8 725.7,312.8 727.9,314.6 729.9,316.6 732.4,318.0 735.2,318.8 737.4,320.5 738.1,323.0 737.1,325.6 737.8,328.2 737.8,330.7 738.8,333.2 739.0,335.8 738.3,338.4 738.8,340.9 738.9,343.5 740.7,345.4 740.9,348.1 742.5,350.1 743.6,352.4 745.7,354.0 746.0,356.7 748.3,358.3 749.0,360.8 748.8,363.7 749.6,366.6 750.1,369.4 750.0,372.3 750.4,375.2 749.8,377.8 750.7,380.5 750.9,383.1 750.4,385.7 750.8,388.4 750.9,391.0 750.9,393.6 751.0,396.3 750.8,398.9 750.7,401.6 750.7,404.2 750.0,406.8 750.7,409.5 750.4,412.1 750.9,414.7 750.6,417.4 750.4,420.0 751.4,422.8 751.4,425.7 752.0,428.6 751.4,431.6 752.0,434.4 751.4,437.1 751.4,439.8 750.4,442.4 750.3,445.3 749.5,448.1 750.5,451.1 749.3,453.9 749.6,456.8 747.2,457.6 747.7,461.2 748.0,464.8 748.8,467.5 749.2,470.3 750.4,472.8 752.1,474.8 753.6,477.1 755.2,479.2 756.2,482.7 757.6,486.0" fill="none" stroke="#ac9cc2" stroke-width="1.6" stroke-linejoin="round"/>
<polyline points="787.0,229.6 787.5,226.9 786.4,224.4 786.9,221.7 786.5,219.0 786.2,216.4 785.8,213.8 788.6,212.7 791.5,211.7 794.4,210.9 797.1,209.3 800.0,208.5 803.0,208.0 806.1,208.2 808.8,209.5 810.7,211.9 813.4,213.6 815.7,215.6 817.5,218.1 819.6,219.6 820.5,222.2 822.1,224.2 824.0,225.9 826.1,227.5 827.5,229.6 830.0,230.2 832.4,231.3 834.7,232.5 836.7,234.4 838.9,236.0 840.5,238.3" fill="none" stroke="#ac9cc2" stroke-width="1.6" stroke-linejoin="round"/>
<polyline points="840.5,238.3 840.8,235.4 840.9,232.5 842.2,229.8 841.9,226.8 842.6,224.2 842.0,221.6 841.5,219.0 842.6,216.4 841.6,213.8 841.7,211.2 841.2,208.6 841.7,206.0 841.9,203.4 841.9,200.8 844.3,198.9 846.4,196.7 849.1,195.1 851.1,193.4 852.7,191.1 854.9,189.6 856.8,187.7 859.2,186.4 860.1,183.5 860.7,180.4 861.8,177.5 863.5,174.9 863.5,172.0 863.6,169.1 864.4,166.3 864.5,163.4 865.1,160.5 865.0,157.6 867.5,155.9 870.0,154.0 872.2,151.9 874.6,150.9 876.4,148.9 878.5,147.3 880.8,146.1 883.4,146.4 885.7,144.8 888.3,145.2 890.7,144.6 893.1,143.4 895.7,144.1 898.1,143.2 900.6,143.7 903.1,143.4 905.6,143.5 908.1,143.6 910.6,142.7 913.1,143.2 915.6,143.2 918.1,143.7 920.6,143.6 923.1,143.7 925.6,143.3 928.1,143.7 930.6,143.5 933.1,143.5 935.6,143.2 938.5,143.8 941.3,144.5 944.0,145.6 946.6,146.9 949.5,147.5 952.0,149.0" fill="none" stroke="#ac9cc2" stroke-width="1.6" stroke-linejoin="round"/>
<polyline points="840.5,238.3 838.0,240.9 836.2,244.0 836.1,246.9 836.0,249.8 836.0,252.7 835.9,255.6 836.2,258.5 837.6,260.6 839.6,262.4 840.1,265.2 841.9,267.1 844.3,268.2 846.9,268.6 847.3,271.1 847.7,273.6 847.9,276.1 849.2,278.4 848.6,281.0 849.7,283.4 849.8,285.9 850.4,288.8 850.1,291.6 849.5,294.5 849.8,297.4 847.6,298.7 844.9,299.0 842.6,300.3 841.6,303.1 841.9,306.1 841.6,308.9 841.1,311.8 840.2,314.7 838.9,317.5 838.2,320.5 835.8,321.6 833.8,323.2 831.6,324.6 829.6,326.2 827.9,328.8 825.7,330.9 823.4,333.0 821.0,334.9 819.9,337.7 819.8,340.7 818.7,343.5 818.1,346.4 818.5,349.1 818.1,351.7 817.5,354.2 816.7,356.8 816.6,359.4 814.0,359.7 811.4,360.3 808.9,361.4 806.3,361.6 803.7,362.2 802.8,364.6 801.8,367.0 800.8,369.4 801.3,372.1 800.2,374.7 801.2,377.4 800.1,380.0 800.2,382.7 801.5,385.4 800.9,388.0 800.4,390.7 800.1,393.4 800.9,396.0 801.1,398.7 801.2,401.3 800.8,404.0 800.0,406.5 800.9,409.1 800.2,411.6 800.6,414.1 799.9,416.6 799.1,419.1 800.1,421.7 799.4,424.2 799.4,427.1 800.3,429.9 800.8,432.8 804.0,436.0 802.8,438.8 802.4,441.7 802.4,444.7 800.9,447.4 800.8,450.4 801.2,452.9 802.1,455.3 802.5,457.8 802.2,460.5 802.6,463.0 803.1,465.4 803.2,468.0 802.9,470.8 801.8,473.4 800.8,476.0 800.7,478.6 799.5,481.1 800.3,483.9 799.2,486.4" fill="none" stroke="#ac9cc2" stroke-width="1.6" stroke-linejoin="round"/>
<polygon points="546.8,272.0 549.0,272.5 551.2,272.6 553.4,271.4 555.6,272.8 557.9,272.5 560.1,272.8 562.3,271.7 564.5,271.9 566.7,271.9 568.9,273.0 571.1,272.3 573.4,271.9 575.6,272.0 577.8,271.8 580.0,272.2 582.4,271.2 584.9,271.1 587.5,272.3 590.0,271.5 592.4,271.2 594.7,272.4 597.0,271.2 599.4,271.3 601.7,271.8 604.1,271.3 606.4,271.7 608.7,272.8 611.1,272.0 613.3,272.7 615.5,272.6 617.7,272.3 619.9,272.9 622.1,272.9 624.3,272.3 626.5,272.6 628.8,271.4 631.0,272.7 633.2,272.2 635.4,272.8 637.6,272.6 639.8,272.0 642.0,271.6 644.2,273.2 646.4,272.5 649.9,270.8 651.9,269.0 654.5,268.4 656.9,267.3 659.2,266.4 661.5,265.7 664.0,265.5 666.3,266.6 668.7,267.7 671.5,267.2 673.8,268.6 676.3,269.0 677.5,271.5 678.1,274.3 677.3,276.4 676.8,278.6 676.5,280.9 675.8,283.0 674.5,284.9 676.2,287.0 676.3,289.9 678.1,291.9 680.4,293.1 683.0,293.9 685.1,295.5 686.3,298.3 687.9,300.7 690.4,302.5 691.2,304.6 692.4,306.5 693.0,308.7 693.9,310.7 693.9,313.1 693.7,315.8 693.7,318.5 693.0,321.1 692.1,323.6 692.2,326.1 691.3,328.5 690.4,330.9 690.3,333.5 690.4,336.0 690.0,338.4 689.4,340.7 688.6,343.0 691.3,341.3 693.9,339.5 695.8,341.1 697.4,343.0 698.1,345.1 699.1,347.2 699.1,349.5 699.2,351.8 698.0,354.4 699.1,357.4 698.0,360.0 698.3,362.4 698.4,364.8 698.3,367.3 699.2,369.6 700.7,371.4 701.6,373.5 702.7,375.6 703.5,377.7 704.4,379.8 704.6,382.3 706.4,384.0 706.5,386.6 707.2,389.0 709.4,391.0 710.1,393.4 710.0,396.0 708.5,398.2 707.0,400.5 706.4,403.2 706.0,405.6 705.4,408.0 706.1,410.5 705.0,412.8 703.6,415.1 704.0,417.6 703.3,420.0 703.1,422.4 702.7,424.7 703.9,427.2 704.0,429.6 703.7,432.0 702.9,434.4 702.8,436.8 703.1,439.3 703.2,441.8 704.2,444.1 705.2,446.4 704.7,448.8 704.3,451.2 704.7,453.6 704.3,456.0 705.0,458.5 704.0,460.8 704.0,463.3 705.4,465.5 704.7,468.1 705.7,470.5 706.4,472.8 708.3,475.0 710.2,477.2 711.2,480.0 713.8,481.2 715.9,483.4 718.4,484.8 720.6,486.7 723.6,487.4 725.6,489.6 727.7,490.7 728.8,492.8 730.4,494.4 732.2,496.5 729.9,497.5 727.9,499.0 725.6,500.0 725.0,502.4 723.3,504.2 722.4,506.4 722.4,509.4 720.8,512.0 718.2,513.1 715.5,513.7 712.8,514.4 709.4,514.4 706.4,516.0 704.1,516.2 701.9,517.0 699.3,517.4 697.2,519.0 694.9,520.4 692.6,521.4 690.0,522.0 687.5,522.1 685.4,523.4 683.5,525.0 681.4,526.4 678.9,526.4 676.6,527.0 674.5,528.4 672.4,529.5 670.0,530.0 667.8,529.9 665.5,529.5 663.4,531.0 661.2,531.5 658.9,531.1 656.7,531.1 654.4,530.8 652.3,531.8 650.0,531.4 646.9,532.2 644.3,534.0 642.1,534.6 640.3,536.0 638.5,537.5 635.8,537.2 634.2,539.0 631.9,540.0 629.3,539.8 627.3,541.5 624.9,542.2 622.4,542.4 620.0,542.8 618.1,544.4 615.4,544.1 613.5,545.7 611.4,547.1 609.0,547.4 606.3,548.7 603.4,549.2 600.6,549.9 598.7,551.8 597.2,554.1 594.8,554.2 593.2,556.4 591.0,556.8 588.8,557.5 586.1,558.6 583.0,557.8 580.4,559.2 577.8,558.0 575.4,556.4 573.7,554.1 571.3,553.6 569.6,551.9 568.0,549.9 566.0,548.8 563.6,548.2 561.3,547.4 558.9,546.6 556.5,546.4 554.0,547.1 551.5,547.0 549.3,545.3 546.8,545.7 544.5,544.8 541.9,545.5 539.8,543.9 537.3,543.9 535.0,543.2 537.8,543.2 540.6,543.4 543.4,544.0 545.9,542.9 548.5,542.0 551.3,542.3 550.9,540.0 551.0,537.8 552.1,535.5 551.3,533.3 549.7,531.6 550.0,528.8 547.8,527.4 547.0,525.3 546.2,523.1 544.7,520.8 542.8,518.8 540.3,517.4 538.5,515.4 537.1,513.4 537.2,510.9 536.3,508.7 536.6,506.2 534.7,504.3 534.4,502.0 534.6,499.5 533.3,497.4 532.0,495.3 532.1,492.8 532.3,490.4 531.7,488.1 529.9,486.1 529.4,483.8 529.0,481.5 530.0,478.8 528.3,476.8 528.2,474.4 528.9,471.9 529.4,469.3 528.7,466.6 528.8,464.0 529.5,461.5 531.7,460.2 532.9,458.0 534.3,456.0 535.0,453.8 536.8,452.2 537.2,449.8 538.6,448.0 539.4,445.6 541.0,443.6 540.5,441.2 542.3,439.3 543.0,437.2 542.9,434.9 543.9,432.8 542.7,430.3 543.5,428.2 544.4,426.1 545.1,423.9 546.6,422.0 547.4,419.8 547.1,417.3 547.6,415.0 548.8,413.0 550.9,411.2 553.1,409.6 555.2,407.9 557.7,406.3 558.6,403.3 561.0,401.5 561.4,398.9 561.1,396.3 561.1,393.7 560.4,391.2 560.6,388.6 559.9,386.1 559.1,383.6 559.1,381.0 558.1,378.5 557.6,375.9 557.6,373.2 556.5,370.7 554.3,369.3 552.9,367.2 552.1,364.6 550.1,363.0 550.3,359.7 551.4,356.6 551.3,354.2 551.9,351.9 553.4,350.0 554.0,347.7 552.4,345.3 552.2,342.2 550.1,340.0 550.3,336.9 549.2,334.0 550.6,331.9 549.9,329.4 550.8,327.2 549.7,324.7 549.4,322.2 549.8,319.5 549.9,316.9 549.2,314.4 549.5,311.2 550.0,308.0 548.7,305.9 548.3,303.6 547.8,301.2 547.1,298.9 546.0,296.8 545.0,294.4 543.9,292.2 542.0,290.4 543.1,287.3 543.6,284.0 543.7,281.1 545.8,278.8 546.0,276.0 546.8,272.0" fill="#fff" stroke="#151515" stroke-width="1.1"/>
<polyline points="550.8,335.2 553.5,333.8 556.4,332.9 559.1,331.5 562.0,330.4 564.6,330.4 567.2,329.4 569.8,329.2 572.4,328.9 575.0,328.5 577.7,329.1 580.2,328.4 582.8,328.0 585.6,327.6 588.5,327.6 591.4,328.1 594.2,327.4 597.0,327.2 597.3,324.2 598.6,321.4 598.8,318.4 600.7,316.7 602.3,314.8 600.6,311.3 602.3,309.2 602.5,306.4 604.1,304.3 605.8,301.9 607.9,299.8 609.4,297.2 607.6,293.7 606.7,290.1 605.0,286.7 606.9,284.6 607.5,281.7 609.4,279.6 610.0,276.0 611.1,272.6" fill="none" stroke="#7a7a7a" stroke-width="0.75"/>
<polyline points="602.3,314.8 604.9,314.1 607.6,314.0 610.3,314.8 612.9,314.0 615.8,314.4 618.7,315.0 621.7,314.8 624.3,312.9 627.0,311.3 629.3,314.3 632.3,316.6 634.6,315.4 636.8,314.0 639.3,313.1 642.9,312.5 646.4,311.3 649.4,309.0 651.6,306.0 654.1,304.7 656.9,304.3 660.0,304.4 663.1,304.4 666.2,304.0 669.3,304.3 672.8,303.7 676.3,303.4 679.8,306.0 680.5,308.9 680.8,311.8 680.7,314.8 681.4,317.4 681.6,320.1 684.2,320.2 686.9,320.3 689.5,319.7 692.1,320.1" fill="none" stroke="#7a7a7a" stroke-width="0.75"/>
<polyline points="607.6,293.7 610.6,295.0 612.9,297.2 614.8,299.7 616.4,302.5 619.9,305.1 621.8,302.6 623.1,299.6 625.2,297.2 627.5,295.8 629.8,294.5 632.3,293.7 634.8,292.9 637.0,291.4 639.3,290.2 642.1,290.6 644.6,292.0 647.6,291.1 650.7,291.0 653.8,290.7 656.9,290.2 659.6,289.8 662.1,288.6 664.8,288.1 667.6,288.1 670.1,287.2 672.8,286.7 676.0,285.0" fill="none" stroke="#7a7a7a" stroke-width="0.75"/>
<polyline points="621.7,314.8 622.9,318.3 623.5,321.9 621.3,324.4 618.4,326.2 616.4,328.9 616.2,331.6 615.5,334.2 615.3,336.9 614.7,339.5 616.1,342.1 616.9,345.0 618.1,347.7 619.9,350.1 622.5,349.9 625.2,349.7 627.8,350.4 630.5,349.7 633.1,349.5 635.8,350.1 638.9,350.6 642.0,350.0 645.0,350.5 648.1,350.1 650.6,351.0 652.8,352.6 655.5,353.2 658.1,353.9 660.4,355.3 662.6,357.3 663.9,360.1 665.7,362.4 665.5,365.6 665.2,368.8 665.7,372.0 665.3,374.8 663.8,377.3 663.0,380.0 663.7,383.0 664.0,386.0 667.2,389.2 665.1,391.3 663.2,393.8 660.8,395.6 660.5,398.3 659.7,400.9 659.2,403.6" fill="none" stroke="#7a7a7a" stroke-width="0.75"/>
<polyline points="557.8,374.6 559.6,377.1 562.4,378.5 564.2,381.0 565.5,383.6 566.4,386.3 567.5,388.9 569.6,391.1 570.6,393.8 572.7,395.5 573.8,398.2 575.6,400.3 577.8,401.9 579.6,404.0 581.9,406.2 583.4,409.1 584.2,411.9 586.1,414.2 587.3,416.8 589.1,418.9 587.2,420.8 586.2,423.2 583.2,425.2 580.4,427.5 580.4,431.2 581.2,434.8 580.8,437.8 579.7,440.5 576.3,441.6 573.2,443.4 570.3,446.3" fill="none" stroke="#7a7a7a" stroke-width="0.75"/>
<polyline points="579.6,404.0 581.7,402.4 584.0,401.4 586.5,400.5 588.5,398.9 591.1,399.3 593.6,398.5 596.2,398.9 593.9,397.5 591.9,395.6 589.8,393.8 589.8,390.9 589.7,388.1 589.3,385.2 589.8,382.3 593.7,380.3 596.9,380.3 600.1,381.0 602.5,380.0 604.8,378.9 606.5,376.7 609.0,375.9 611.6,375.6 614.1,375.2 616.2,376.6 618.8,377.0 620.7,378.9 623.1,379.7 624.4,383.5 623.5,386.3 621.7,388.6 620.5,391.2 619.3,393.8 619.1,396.4 619.5,398.9 619.3,401.5 620.7,404.0 621.7,406.6 623.1,409.1" fill="none" stroke="#7a7a7a" stroke-width="0.75"/>
<polyline points="628.2,406.6 628.1,403.4 628.2,400.2 631.6,399.7 635.0,398.9 637.5,397.2 640.0,395.6 642.7,396.6 645.5,397.2 648.0,398.8 650.7,400.1 653.6,401.2 656.5,402.1 659.2,403.6 661.7,405.0 664.4,406.0 667.2,406.8 668.8,410.0 670.4,413.2 671.3,416.3 671.5,419.6 672.0,422.8 674.0,424.9 675.6,427.4 676.9,430.0 678.4,432.4 680.4,434.1 681.7,436.4 683.2,438.4 684.8,440.4 686.1,443.5 686.4,446.8 686.2,449.5 686.9,452.1 686.4,454.8 685.1,457.4 684.0,460.0 683.2,462.8 685.3,465.2 687.9,467.2 689.6,470.0" fill="none" stroke="#7a7a7a" stroke-width="0.75"/>
<polyline points="660.8,395.6 663.6,396.0 666.4,396.3 669.1,397.3 672.0,397.2 674.8,397.3 677.2,398.7 680.0,398.8 682.6,397.1 684.5,394.7 686.4,392.4 685.1,390.0 682.9,388.4 681.6,386.0 682.7,383.4 682.7,380.7 683.2,378.0 686.1,378.1 688.9,377.7 691.5,376.4 694.4,376.4 697.0,376.0" fill="none" stroke="#7a7a7a" stroke-width="0.75"/>
<polyline points="579.7,437.6 582.2,438.9 584.8,440.0 587.6,440.5 590.3,438.6 593.4,437.6 595.7,440.4 597.7,443.4 600.7,442.2 603.5,440.5 605.0,438.4 607.4,437.2 608.7,434.9 610.7,433.3 613.7,432.2 616.2,430.1 619.3,429.0 621.5,431.2 623.7,433.3 627.0,433.1 630.0,431.9 632.7,432.2 635.2,433.2 638.0,433.1 640.8,433.6 643.6,433.6 646.4,434.0 647.7,437.1 648.0,440.4 650.8,441.1 653.5,442.2 656.0,443.6 658.5,445.2 661.3,445.9 664.0,446.8 666.2,448.1 668.8,448.4 671.3,448.0 673.8,448.7 676.3,447.9 678.9,448.4 681.4,448.6 683.9,448.2 686.4,448.4 689.0,447.8 691.2,446.5 693.6,445.5 696.0,444.4 698.7,444.6 701.3,443.4 704.0,443.6" fill="none" stroke="#7a7a7a" stroke-width="0.75"/>
<polyline points="648.0,448.4 648.0,451.2 648.9,453.8 649.6,456.4 648.1,458.6 646.1,460.5 644.8,462.8 643.0,464.6 640.9,466.0 639.1,467.8 638.1,470.3 637.0,472.6 635.3,474.5 634.2,476.8 632.6,479.1 631.1,481.5 628.9,483.4 627.9,486.1 625.5,487.8 624.1,490.3 623.3,493.2 621.7,495.8 620.8,498.7 620.2,502.0 620.8,505.4" fill="none" stroke="#7a7a7a" stroke-width="0.75"/>
<polyline points="546.0,471.8 548.3,473.1 550.5,474.5 553.0,475.4 555.2,476.8 557.9,477.1 560.4,478.0 562.9,479.0 565.3,480.2 566.0,483.6 567.0,486.9 569.4,484.3 572.0,481.8 576.2,481.8 576.4,484.3 576.2,486.9 577.3,489.3 577.1,491.9" fill="none" stroke="#7a7a7a" stroke-width="0.75"/>
<polyline points="577.1,491.9 575.4,495.3 573.0,496.5 570.3,496.8 568.0,498.4 565.3,498.7 563.2,501.6 560.3,503.7 560.5,506.2 560.8,508.8 560.5,511.3 560.3,513.8 559.5,516.7 557.9,519.4 556.9,522.2 555.7,525.0 555.0,527.9 553.5,530.6 550.2,534.0" fill="none" stroke="#7a7a7a" stroke-width="0.75"/>
<polyline points="577.1,491.9 579.0,493.7 581.1,495.2 583.4,496.6 584.8,499.0 587.1,500.3 589.0,502.4 590.8,504.6 592.2,507.1 593.1,509.5 592.9,512.1 593.0,514.7 593.9,517.1 596.0,518.5 598.4,519.3 600.6,520.5 602.0,522.6 603.4,524.7 604.0,527.2 606.1,529.0 608.4,530.7 610.7,532.3 611.7,535.6 612.4,539.0 610.6,541.7 609.1,544.6 607.3,547.4" fill="none" stroke="#7a7a7a" stroke-width="0.75"/>
<polyline points="587.1,500.3 589.5,501.6 592.1,502.3 594.8,502.6 597.2,503.7 599.4,505.1 602.1,505.2 604.3,506.7 606.7,507.6 609.0,508.7 611.9,507.6 614.8,506.5 617.9,506.5 620.8,505.4 622.0,507.8 622.0,510.5 622.2,513.1 623.3,515.5 625.8,514.7 628.3,514.5 630.9,514.6 633.4,514.1 635.9,513.8 638.8,514.0 641.8,514.2 644.7,513.4 647.6,513.8" fill="none" stroke="#7a7a7a" stroke-width="0.75"/>
<circle cx="312.8" cy="196" r="3.2" fill="#0c0c0c" stroke="#4a4a44" stroke-width="1"/>
<circle cx="483.6" cy="264.8" r="3.2" fill="#0c0c0c" stroke="#4a4a44" stroke-width="1"/>
<circle cx="606.8" cy="208.8" r="3.2" fill="#0c0c0c" stroke="#4a4a44" stroke-width="1"/>
<circle cx="772.8" cy="156" r="3.2" fill="#0c0c0c" stroke="#4a4a44" stroke-width="1"/>
<circle cx="914.8" cy="178.4" r="3.2" fill="#0c0c0c" stroke="#4a4a44" stroke-width="1"/>
<circle cx="764.4" cy="332" r="3.2" fill="#0c0c0c" stroke="#4a4a44" stroke-width="1"/>
<circle cx="885.7" cy="390.2" r="3.2" fill="#0c0c0c" stroke="#4a4a44" stroke-width="1"/>
<circle cx="854.2" cy="435.8" r="3.2" fill="#0c0c0c" stroke="#4a4a44" stroke-width="1"/>
<circle cx="830.9" cy="482.3" r="3.2" fill="#0c0c0c" stroke="#4a4a44" stroke-width="1"/>
<circle cx="731.9" cy="497.4" r="3.2" fill="#0c0c0c" stroke="#4a4a44" stroke-width="1"/>
<circle cx="931.8" cy="487.8" r="3.2" fill="#0c0c0c" stroke="#4a4a44" stroke-width="1"/>
<circle cx="939" cy="523.4" r="3.2" fill="#0c0c0c" stroke="#4a4a44" stroke-width="1"/>
<circle cx="493.5" cy="532" r="3.2" fill="#0c0c0c" stroke="#4a4a44" stroke-width="1"/>
<circle cx="435.9" cy="465.4" r="3.2" fill="#0c0c0c" stroke="#4a4a44" stroke-width="1"/>
<circle cx="446.8" cy="425.8" r="3.2" fill="#0c0c0c" stroke="#4a4a44" stroke-width="1"/></g></svg>
<div class="t" style="left:314px;top:181.0px;font-size:12px;font-weight:700;color:#cfcfcf;text-shadow:0 0 1.5px #111,0 0 1px #111;">Bamako</div>
<div class="t" style="left:484px;top:252.5px;font-size:10.3px;font-weight:400;color:#bdbdbd;text-shadow:0 0 1.5px #111,0 0 1px #111;">Bobo-Dioulasso</div>
<div class="t" style="left:608px;top:194.8px;font-size:11.5px;font-weight:700;color:#cfcfcf;text-shadow:0 0 1.5px #111,0 0 1px #111;">Ouagadougou</div>
<div class="t" style="left:772.8px;top:143.0px;font-size:10.6px;font-weight:700;color:#cfcfcf;text-shadow:0 0 1.5px #111,0 0 1px #111;">Niamey</div>
<div class="t" style="left:915.2px;top:165.9px;font-size:10.5px;font-weight:400;color:#bdbdbd;text-shadow:0 0 1.5px #111,0 0 1px #111;">Sokoto</div>
<div class="t" style="left:765.2px;top:319.1px;font-size:10.5px;font-weight:400;color:#bdbdbd;text-shadow:0 0 1.5px #111,0 0 1px #111;">Djougou</div>
<div class="t" style="left:886.1px;top:377.6px;font-size:10.5px;font-weight:400;color:#bdbdbd;text-shadow:0 0 1.5px #111,0 0 1px #111;">Ilorin</div>
<div class="t" style="left:855.1px;top:420.6px;font-size:11.5px;font-weight:400;color:#c8c8c8;text-shadow:0 0 1.5px #111,0 0 1px #111;">Ibadan</div>
<div class="t" style="left:831.4px;top:468.0px;font-size:11.6px;font-weight:700;color:#d4d4d4;text-shadow:0 0 1.5px #111,0 0 1px #111;">Lagos</div>
<div class="t" style="left:732.8px;top:481.7px;font-size:12px;font-weight:700;color:#d4d4d4;text-shadow:0 0 1.5px #111,0 0 1px #111;">Lome</div>
<div class="t" style="left:932.7px;top:472.6px;font-size:11.5px;font-weight:400;color:#c8c8c8;text-shadow:0 0 1.5px #111,0 0 1px #111;">Ben</div>
<div class="t" style="left:939.5px;top:509.6px;font-size:11.5px;font-weight:400;color:#c8c8c8;text-shadow:0 0 1.5px #111,0 0 1px #111;">Wa</div>
<div class="t" style="left:447.7px;top:413.1px;font-size:10.5px;font-weight:400;color:#bdbdbd;text-shadow:0 0 1.5px #111,0 0 1px #111;">Bouake</div>
<div class="t" style="left:436.9px;top:452.5px;font-size:10.3px;font-weight:700;color:#c8c8c8;text-shadow:0 0 1.5px #111,0 0 1px #111;">Yamoussoukro</div>
<div class="t" style="left:494px;top:518.5px;font-size:11.4px;font-weight:700;color:#d4d4d4;text-shadow:0 0 1.5px #111,0 0 1px #111;">Abidjan</div>
<div class="t" style="left:580px;top:155.9px;font-size:10.5px;letter-spacing:1.25px;color:#a48ecc">BURKINA</div>
<div class="t" style="left:591.5px;top:167.4px;font-size:10.5px;letter-spacing:1.6px;color:#a48ecc">FASO</div>
<div class="t" style="left:771.2px;top:305.9px;font-size:10.5px;letter-spacing:1.3px;color:#a48ecc">BENIN</div>
<div class="t" style="left:712.8px;top:378.9px;font-size:9px;letter-spacing:1.3px;color:#a48ecc">TOGO</div>
<div class="t" style="left:794.9px;top:520.4px;font-size:10.5px;font-style:italic;letter-spacing:0.5px;color:#4a78b0">Bight of</div>
<div class="t" style="left:800.4px;top:531.8px;font-size:10.5px;font-style:italic;letter-spacing:0.5px;color:#4a78b0">Benin</div>
<svg class="b" style="left:0;top:0" width="1328" height="625" viewBox="0 0 1328 625"><g clip-path="url(#mc2)"><clipPath id="mc2"><rect x="302" y="104" width="648" height="521"/></clipPath><circle cx="576.3" cy="299.2" r="8.4" fill="rgba(255,250,0,0.36)"/><circle cx="576.3" cy="299.2" r="6.4" fill="#f05a0a"/><circle cx="576.3" cy="299.2" r="4.6" fill="#e60000"/><text x="576.3" y="302.91" text-anchor="middle" font-family="Liberation Sans" font-weight="700" font-size="10.3" fill="#fff">0</text>
<circle cx="633.1" cy="283.5" r="8.4" fill="rgba(255,250,0,0.36)"/><circle cx="633.1" cy="283.5" r="6.4" fill="#f05a0a"/><circle cx="633.1" cy="283.5" r="4.6" fill="#e60000"/><text x="633.1" y="287.21" text-anchor="middle" font-family="Liberation Sans" font-weight="700" font-size="10.3" fill="#fff">0</text>
<circle cx="642.3" cy="303.7" r="8.4" fill="rgba(255,250,0,0.36)"/><circle cx="642.3" cy="303.7" r="6.4" fill="#f05a0a"/><circle cx="642.3" cy="303.7" r="4.6" fill="#e60000"/><text x="642.3" y="307.41" text-anchor="middle" font-family="Liberation Sans" font-weight="700" font-size="10.3" fill="#fff">2</text>
<circle cx="665.4" cy="339.5" r="8.4" fill="rgba(255,250,0,0.36)"/><circle cx="665.4" cy="339.5" r="6.4" fill="#f05a0a"/><circle cx="665.4" cy="339.5" r="4.6" fill="#e60000"/><text x="665.4" y="343.21" text-anchor="middle" font-family="Liberation Sans" font-weight="700" font-size="10.3" fill="#fff">6</text>
<circle cx="594.3" cy="358.6" r="8.4" fill="rgba(255,250,0,0.36)"/><circle cx="594.3" cy="358.6" r="6.4" fill="#f05a0a"/><circle cx="594.3" cy="358.6" r="4.6" fill="#e60000"/><text x="594.3" y="362.31" text-anchor="middle" font-family="Liberation Sans" font-weight="700" font-size="10.3" fill="#fff">9</text>
<circle cx="627.2" cy="417.2" r="9.6" fill="rgba(255,250,0,0.36)"/><circle cx="627.2" cy="417.2" r="7.6" fill="#f05a0a"/><circle cx="627.2" cy="417.2" r="5.6" fill="#e60000"/><text x="627.2" y="420.91" text-anchor="middle" font-family="Liberation Sans" font-weight="700" font-size="10.3" fill="#fff">15</text>
<circle cx="691.2" cy="415.6" r="9.4" fill="rgba(255,250,0,0.36)"/><circle cx="691.2" cy="415.6" r="7.4" fill="#f05a0a"/><circle cx="691.2" cy="415.6" r="5.6" fill="#e60000"/><text x="691.2" y="419.31" text-anchor="middle" font-family="Liberation Sans" font-weight="700" font-size="10.3" fill="#fff">10</text>
<circle cx="562.4" cy="424.7" r="12.6" fill="rgba(255,250,0,0.36)"/><circle cx="562.4" cy="424.7" r="10.8" fill="#f05a0a"/><circle cx="562.4" cy="424.7" r="8.6" fill="#e60000"/><text x="562.4" y="428.59" text-anchor="middle" font-family="Liberation Sans" font-weight="700" font-size="10.8" fill="#fff">40</text>
<circle cx="561.3" cy="461.1" r="13.6" fill="rgba(255,250,0,0.36)"/><circle cx="561.3" cy="461.1" r="12.2" fill="#f05a0a"/><circle cx="561.3" cy="461.1" r="10.2" fill="#e60000"/><text x="561.3" y="464.99" text-anchor="middle" font-family="Liberation Sans" font-weight="700" font-size="10.8" fill="#fff">57</text>
<circle cx="603.5" cy="469.4" r="29.4" fill="rgba(255,250,0,0.36)"/><circle cx="603.5" cy="469.4" r="27.3" fill="#f05a0a"/><circle cx="603.5" cy="469.4" r="25.2" fill="#e60000"/><text x="603.5" y="473.72" text-anchor="middle" font-family="Liberation Sans" font-weight="700" font-size="12" fill="#fff">796</text>
<circle cx="549.3" cy="494.5" r="8.4" fill="rgba(255,250,0,0.36)"/><circle cx="549.3" cy="494.5" r="6.4" fill="#f05a0a"/><circle cx="549.3" cy="494.5" r="4.6" fill="#e60000"/><text x="549.3" y="498.21" text-anchor="middle" font-family="Liberation Sans" font-weight="700" font-size="10.3" fill="#fff">4</text>
<circle cx="694.9" cy="475.9" r="10.2" fill="rgba(255,250,0,0.36)"/><circle cx="694.9" cy="475.9" r="8.2" fill="#f05a0a"/><circle cx="694.9" cy="475.9" r="6.5" fill="#e60000"/><text x="694.9" y="479.61" text-anchor="middle" font-family="Liberation Sans" font-weight="700" font-size="10.3" fill="#fff">20</text>
<circle cx="675.8" cy="515.3" r="29.9" fill="rgba(255,250,0,0.36)"/><circle cx="675.8" cy="515.3" r="27.9" fill="#f05a0a"/><circle cx="675.8" cy="515.3" r="25.8" fill="#e60000"/><text x="675.8" y="519.62" text-anchor="middle" font-family="Liberation Sans" font-weight="700" font-size="12" fill="#fff">1442</text>
<circle cx="657.4" cy="485.4" r="12.9" fill="rgba(255,250,0,0.36)"/><circle cx="657.4" cy="485.4" r="11.6" fill="#f05a0a"/><circle cx="657.4" cy="485.4" r="9.5" fill="#e60000"/><text x="657.4" y="489.29" text-anchor="middle" font-family="Liberation Sans" font-weight="700" font-size="10.8" fill="#fff">45</text>
<circle cx="579.6" cy="531.4" r="9.7" fill="rgba(255,250,0,0.36)"/><circle cx="579.6" cy="531.4" r="7.7" fill="#f05a0a"/><circle cx="579.6" cy="531.4" r="5.6" fill="#e60000"/><text x="579.6" y="535.11" text-anchor="middle" font-family="Liberation Sans" font-weight="700" font-size="10.3" fill="#fff">15</text>
<circle cx="627.5" cy="526.4" r="9.4" fill="rgba(255,250,0,0.36)"/><circle cx="627.5" cy="526.4" r="7.4" fill="#f05a0a"/><circle cx="627.5" cy="526.4" r="5.6" fill="#e60000"/><text x="627.5" y="530.11" text-anchor="middle" font-family="Liberation Sans" font-weight="700" font-size="10.3" fill="#fff">11</text><rect x="903.5" y="119.5" width="31" height="29" fill="#2a2929" stroke="#2e9af0" stroke-width="1.3"/><g fill="none" stroke="#2e9af0" stroke-width="1.1"><rect x="911.5" y="125.5" width="6.3" height="6.3"/><rect x="920.5" y="125.5" width="6.3" height="6.3"/><rect x="911.5" y="134.3" width="6.3" height="6.3"/><rect x="920.5" y="134.3" width="6.3" height="6.3"/><path d="M913,127 L916,130 M913,129.5 v1.5 M922,127.5 h3 v2 h-3 v1.5 h3.5 M912.5,139.5 q2,-3 4.5,0 M921.8,136 h4 M922.3,137.5 v2 M924.5,137.8 v2"/></g><rect x="903" y="580" width="32" height="46" fill="#2b2b2b"/><line x1="911" y1="595.5" x2="927" y2="595.5" stroke="#b8b8b8" stroke-width="1.3"/><line x1="919" y1="588" x2="919" y2="603" stroke="#b8b8b8" stroke-width="1.3"/><line x1="903" y1="612.5" x2="935" y2="612.5" stroke="#5a5a5a" stroke-width="1"/></g></svg>

<svg class="b" style="left:0;top:0" width="1328" height="625" viewBox="0 0 1328 625"><path d="M1144.00,538.00 A67,67 0 0 1 1148.21,538.13 L1146.26,569.07 A36,36 0 0 0 1144.00,569.00 Z" fill="#d9d9d9"/><path d="M1148.21,538.13 A67,67 0 0 1 1172.53,665.62 L1159.33,637.57 A36,36 0 0 0 1146.26,569.07 Z" fill="#ff7f7f"/><path d="M1172.53,665.62 A67,67 0 1 1 1144.00,538.00 L1144.00,569.00 A36,36 0 1 0 1159.33,637.57 Z" fill="#74b1ff"/><polyline points="1145.5,537 1145.5,518.5 1154.5,518.5" fill="none" stroke="#9a9a9a" stroke-width="1"/><polyline points="1210.7,592.4 1229.8,588.2 1237,588.2" fill="none" stroke="#9a9a9a" stroke-width="1"/><polyline points="1078,620 1051,623.5 1046,623.5" fill="none" stroke="#9a9a9a" stroke-width="1"/></svg>

<div class="t" style="left:1157.5px;top:514.8px;font-size:11px;color:#e8e8e8">38 1%</div><div class="t" style="left:1241px;top:584.7px;font-size:11px;color:#e8e8e8">Female 42%</div><div class="t" style="left:998px;top:621.2px;font-size:11px;color:#e8e8e8">Male 57%</div>
</body></html>
